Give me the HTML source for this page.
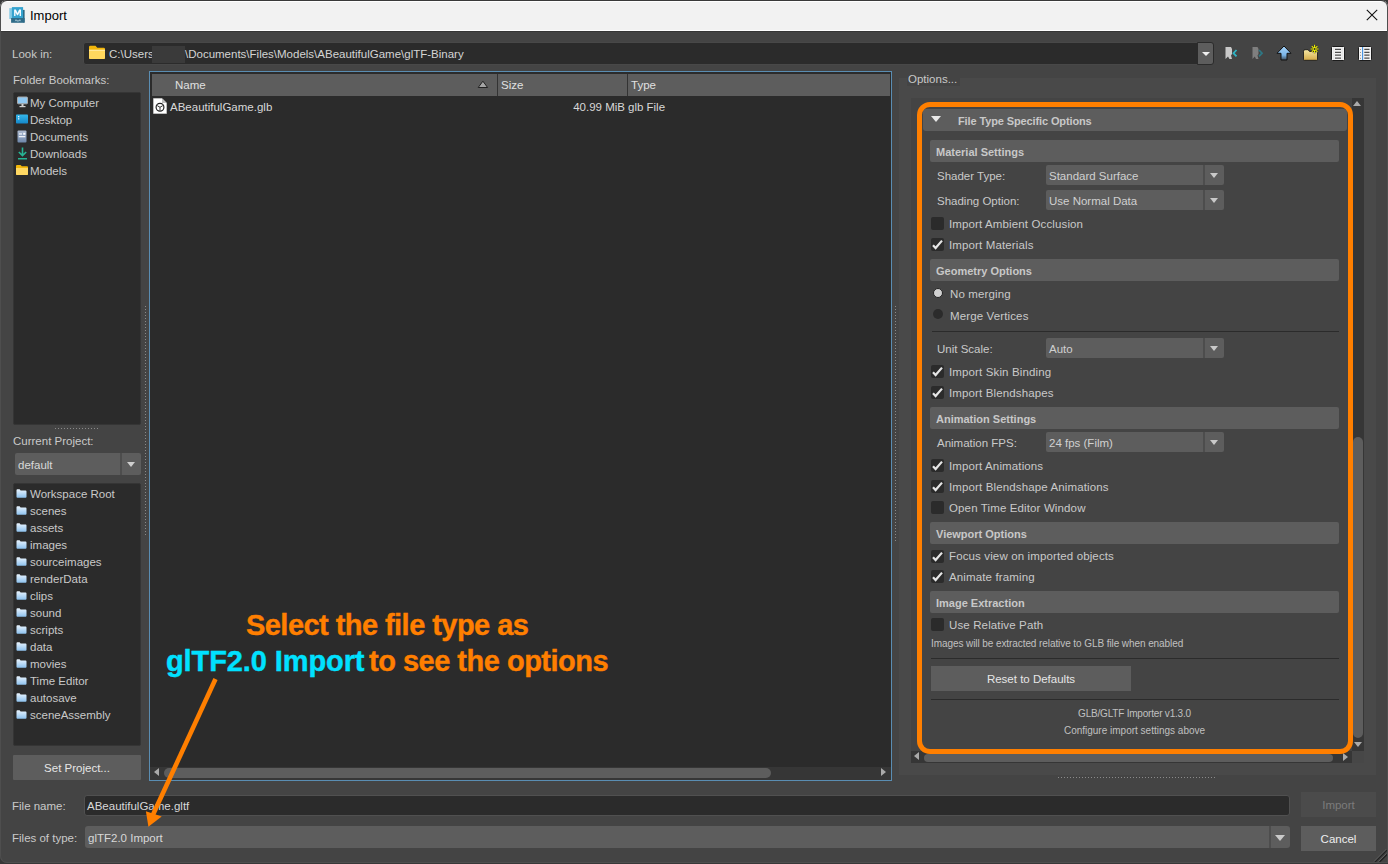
<!DOCTYPE html>
<html><head><meta charset="utf-8">
<style>
*{box-sizing:border-box;margin:0;padding:0}
html,body{width:1388px;height:864px;overflow:hidden;background:#383838}
body{font-family:"Liberation Sans",sans-serif;font-size:11.5px;color:#c9c9c9;position:relative}
.a{position:absolute}
.t{position:absolute;white-space:nowrap;line-height:14px}
.win{position:absolute;left:0;top:0;width:1388px;height:863px;background:#444444;border-radius:7px 7px 0 7px;overflow:hidden}
.frame{position:absolute;left:0;top:0;width:1388px;height:863px;border-radius:7px 7px 0 7px;border:1px solid #4e4e4e;border-top-color:#3a3a3a;pointer-events:none}
.title{position:absolute;left:0;top:0;width:1388px;height:32px;background:#f2f2f2;border-top:1px solid #3a3a3a;border-bottom:1px solid #363636;box-shadow:inset 0 1px 0 #fff,inset 0 -1px 0 #fff}
.hdr{position:absolute;background:#5d5d5d;border-radius:2px;left:930px;width:409px;height:22px}
.hdr span{position:absolute;left:6px;top:5px;font-weight:bold;color:#c8c8c8;white-space:nowrap;font-size:11px;line-height:14px}
.cb{position:absolute;left:931px;width:13px;height:13px;background:#2b2b2b;border-radius:2px}
.cb svg{position:absolute;left:0;top:0}
.lbl{position:absolute;left:949px;white-space:nowrap;color:#c9c9c9;line-height:14px;letter-spacing:0.13px}
.combo{position:absolute;left:1046px;width:178px;height:20px;background:#5d5d5d;border-radius:2px}
.combo .sep{position:absolute;left:157px;top:0;width:2px;height:20px;background:#4d4d4d}
.combo .ar{position:absolute;left:164px;top:8px;width:0;height:0;border-left:4.5px solid transparent;border-right:4.5px solid transparent;border-top:5px solid #c9c9c9}
.combo span{position:absolute;left:3px;top:4px;white-space:nowrap;color:#d0d0d0;line-height:14px}
.flab{position:absolute;left:937px;white-space:nowrap;color:#c9c9c9;line-height:14px}
.sepl{position:absolute;left:931px;width:408px;height:1px;background:#2b2b2b}
.row{position:absolute;left:30px;white-space:nowrap;line-height:14px;color:#c9c9c9}
</style></head><body>
<div class="win">
  <!-- title bar -->
  <div class="title"></div>
  <svg class="a" style="left:6px;top:4px" width="22" height="22" viewBox="0 0 22 22">
<rect x="3.3" y="4.1" width="2.8" height="10.9" fill="#86cbe6"/>
<rect x="17" y="5.9" width="1.6" height="12.5" fill="#2a6580"/>
<rect x="5.9" y="3.1" width="11.2" height="10.9" fill="#35a3cf"/>
<rect x="5.1" y="14" width="13.5" height="4.8" fill="#2e6b88"/>
<path d="M8.1 12V5.6H9.9L11.5 9L13.1 5.6H15V12H13.6V8.2L12 11.3H11L9.5 8.2V12Z" fill="#f4fbff"/>
<path d="M9.3 17.2L10 15.6L10.7 17.2M11.4 16.2V17.2H12.4V16.2M13.2 17.2L13.9 15.6L14.6 17.2" stroke="#cfe3ec" stroke-width="0.6" fill="none"/>
</svg>
  <div class="t" style="left:30px;top:8px;color:#000;font-size:13px;line-height:15px">Import</div>
  <svg class="a" style="left:1366px;top:9px" width="12" height="12"><path d="M0.8 0.8L11.2 11.2M11.2 0.8L0.8 11.2" stroke="#111" stroke-width="1.1"/></svg>

  <!-- Look in -->
  <div class="t" style="left:12px;top:47px">Look in:</div>
  <div class="a" style="left:83px;top:42px;width:1131px;height:23px;background:#2b2b2b;border-radius:3px;border:1px solid #484848"></div>
  <div class="a" style="left:1197px;top:42px;width:17px;height:23px;background:#5d5d5d;border-radius:0 3px 3px 0;border:1px solid #2b2b2b"></div>
  <div class="a" style="left:1201.5px;top:52px;width:0;height:0;border-left:4px solid transparent;border-right:4px solid transparent;border-top:4.5px solid #f0f0f0"></div>
  <svg class="a" style="left:89px;top:45px" width="17" height="15" viewBox="0 0 17 15">
<path d="M0 2Q0 0.7 1.3 0.7H6.5L8.3 2.8H14.7Q16 2.8 16 4.1V12.7Q16 14 14.7 14H1.3Q0 14 0 12.7Z" fill="#f2b60a"/>
<path d="M0 4.8H16V12.7Q16 14 14.7 14H1.3Q0 14 0 12.7Z" fill="#ffd75e"/>
<path d="M0 4.8H16V6H0Z" fill="#ffe79a"/>
</svg>
  <div class="t" style="left:109px;top:47px;color:#d4d4d4">C:\Users\</div>
  <div class="a" style="left:152px;top:46px;width:33px;height:17px;background:#3a3a3a"></div>
  <div class="t" style="left:185px;top:47px;color:#d4d4d4">\Documents\Files\Models\ABeautifulGame\glTF-Binary</div>
  <svg class="a" style="left:1225px;top:46px" width="14" height="14" viewBox="0 0 14 14">
<path d="M0.5 1H6L7 3V8L6 9.5L7 13H4.5L3 10.5L0.5 13Z" fill="#c9c9c9"/>
<path d="M11.5 4L8.5 7.2L11.5 10.4" stroke="#2fb3c4" stroke-width="1.8" fill="none"/>
</svg>
<svg class="a" style="left:1252px;top:46px" width="12" height="14" viewBox="0 0 12 14">
<path d="M0.5 1H5.5L6.5 3V8L5.5 9.5L6.5 13H4L2.8 10.5L0.5 13Z" fill="#7f7f7f"/>
<path d="M7 4L10 7.2L7 10.4" stroke="#2e7784" stroke-width="1.8" fill="none"/>
</svg>
<svg class="a" style="left:1276px;top:45px" width="16" height="16" viewBox="0 0 16 16">
<defs><linearGradient id="ug" x1="0" y1="0" x2="0" y2="1"><stop offset="0" stop-color="#a8d4f8"/><stop offset="0.65" stop-color="#7ab6ea"/><stop offset="1" stop-color="#3b4a58"/></linearGradient></defs>
<path d="M8 1L15 8.3H11V15H5V8.3H1Z" fill="url(#ug)" stroke="#111" stroke-width="1" stroke-linejoin="miter"/>
</svg>
<svg class="a" style="left:1302px;top:44px" width="18" height="18" viewBox="0 0 18 18">
<defs><linearGradient id="nfg" x1="0" y1="0" x2="0" y2="1"><stop offset="0" stop-color="#f4e7a6"/><stop offset="1" stop-color="#d6ac48"/></linearGradient></defs>
<path d="M1.5 7.2Q1.5 5.7 3 5.7H6L7.6 7.5H14.5Q15.5 7.5 15.5 8.5V15.5Q15.5 16.3 14.7 16.3H2.3Q1.5 16.3 1.5 15.5Z" fill="url(#nfg)" stroke="#1d1d1d" stroke-width="0.9"/>
<path d="M12.6 0.8V9.2M8.6 5H16.6M9.8 2.2L15.4 7.8M15.4 2.2L9.8 7.8" stroke="#2a2a2a" stroke-width="1.7"/>
<path d="M12.6 0.8V9.2M8.6 5H16.6M9.8 2.2L15.4 7.8M15.4 2.2L9.8 7.8" stroke="#f2f200" stroke-width="1.1"/>
<circle cx="12.6" cy="5" r="1" fill="#2a2a2a"/>
</svg>
<svg class="a" style="left:1331px;top:46px" width="14" height="15" viewBox="0 0 14 15">
<rect x="0.5" y="0.5" width="13" height="14" rx="1" fill="#f2f2f2" stroke="#1c1c1c"/>
<path d="M2.8 1V14M11.2 1V14" stroke="#dedede" stroke-width="0.8"/>
<path d="M4 3.3H10M4 6.3H10M4 9.2H10M4 12.2H10" stroke="#4e4e4e" stroke-width="1.2"/>
</svg>
<svg class="a" style="left:1358px;top:46px" width="14" height="15" viewBox="0 0 14 15">
<rect x="0.5" y="0.5" width="13" height="14" rx="1" fill="#f2f2f2" stroke="#1c1c1c"/>
<path d="M4.6 1V14" stroke="#3f8fe0" stroke-width="1.1"/>
<path d="M2.5 3V3.6M2.5 6V6.6M2.5 8.9V9.5M2.5 11.9V12.5" stroke="#555" stroke-width="1"/>
<path d="M6.3 3.3H11.5M6.3 6.3H11.5M6.3 9.2H11.5M6.3 12.2H11.5" stroke="#4e4e4e" stroke-width="1.2"/>
</svg>

  <!-- Left panel -->
  <div class="t" style="left:13px;top:73px">Folder Bookmarks:</div>
  <div class="a" style="left:13px;top:92px;width:128px;height:333px;background:#2b2b2b;border:1px solid #353535;border-radius:2px"></div>
  <svg class="a" style="left:17px;top:96px" width="11" height="12" viewBox="0 0 11 12">
<rect x="0.5" y="1" width="10" height="6.8" rx="0.8" fill="#8ec8f2" stroke="#a8a8a8" stroke-width="1"/>
<rect x="4.5" y="8" width="2" height="2.5" fill="#cfcfcf"/><rect x="2.5" y="10" width="6" height="1.2" fill="#cfcfcf"/>
</svg>
<div class="row" style="top:96px">My Computer</div>
<svg class="a" style="left:16px;top:114px" width="12" height="10" viewBox="0 0 12 10">
<defs><linearGradient id="dg" x1="0" y1="0" x2="0" y2="1"><stop offset="0" stop-color="#35b7ea"/><stop offset="1" stop-color="#1587c8"/></linearGradient></defs>
<rect x="0" y="0.5" width="12" height="9" rx="0.8" fill="url(#dg)"/><rect x="2" y="2" width="1.3" height="1.3" fill="#e8f6ff"/><rect x="2" y="4.2" width="1.3" height="1.3" fill="#e8f6ff"/>
</svg>
<div class="row" style="top:113px">Desktop</div>
<svg class="a" style="left:17px;top:130px" width="10" height="13" viewBox="0 0 10 13">
<defs><linearGradient id="docg" x1="0" y1="0" x2="0" y2="1"><stop offset="0" stop-color="#aebbd0"/><stop offset="1" stop-color="#6f88ab"/></linearGradient></defs>
<rect x="0.5" y="0.5" width="9" height="12" rx="1" fill="url(#docg)"/><rect x="2" y="3.3" width="3" height="1.3" fill="#eef2f8"/><rect x="6.2" y="2.8" width="2.2" height="2" fill="#fbfcfe"/><rect x="1.8" y="6" width="6.5" height="1.3" fill="#eef2f8"/>
</svg>
<div class="row" style="top:130px">Documents</div>
<svg class="a" style="left:17px;top:147px" width="11" height="13" viewBox="0 0 11 13">
<path d="M5.5 0.5V8.5M1.8 5L5.5 8.6L9.2 5M1 11.8H10" stroke="#27b494" stroke-width="1.6" fill="none"/>
</svg>
<div class="row" style="top:147px">Downloads</div>
<svg class="a" style="left:16px;top:165px" width="12" height="10" viewBox="0 0 12 10">
<path d="M0 1Q0 0 1 0H4.5L5.8 1.3H11Q12 1.3 12 2.3V9Q12 10 11 10H1Q0 10 0 9Z" fill="#f2b60a"/>
<path d="M0 3H12V9Q12 10 11 10H1Q0 10 0 9Z" fill="#ffd863"/>
</svg>
<div class="row" style="top:164px">Models</div>
  <div class="a" style="left:55px;top:428px;width:43px;height:1px;background:repeating-linear-gradient(to right,#8a8a8a 0 1px,transparent 1px 3px)"></div>
  <div class="t" style="left:13px;top:434px">Current Project:</div>
  <div class="a" style="left:15px;top:453px;width:126px;height:22px;background:#5d5d5d;border-radius:2px"></div>
  <div class="a" style="left:120px;top:453px;width:2px;height:22px;background:#4d4d4d"></div>
  <div class="a" style="left:127px;top:462px;width:0;height:0;border-left:4.5px solid transparent;border-right:4.5px solid transparent;border-top:5px solid #cfcfcf"></div>
  <div class="t" style="left:18px;top:458px;color:#d8d8d8">default</div>
  <div class="a" style="left:13px;top:483px;width:128px;height:263px;background:#2b2b2b;border:1px solid #353535;border-radius:2px"></div>
  <svg class="a" style="left:16px;top:489px" width="11" height="9" viewBox="0 0 11 9"><defs><linearGradient id="pf489" x1="0" y1="0" x2="0" y2="1"><stop offset="0" stop-color="#eaf5ff"/><stop offset="1" stop-color="#8ec2ee"/></linearGradient></defs><path d="M0.5 1.2Q0.5 0.3 1.4 0.3H3.6L4.6 1.6H9.6Q10.5 1.6 10.5 2.5V7.8Q10.5 8.7 9.6 8.7H1.4Q0.5 8.7 0.5 7.8Z" fill="url(#pf489)"/></svg><div class="row" style="top:487px">Workspace Root</div>
<svg class="a" style="left:16px;top:506px" width="11" height="9" viewBox="0 0 11 9"><defs><linearGradient id="pf506" x1="0" y1="0" x2="0" y2="1"><stop offset="0" stop-color="#eaf5ff"/><stop offset="1" stop-color="#8ec2ee"/></linearGradient></defs><path d="M0.5 1.2Q0.5 0.3 1.4 0.3H3.6L4.6 1.6H9.6Q10.5 1.6 10.5 2.5V7.8Q10.5 8.7 9.6 8.7H1.4Q0.5 8.7 0.5 7.8Z" fill="url(#pf506)"/></svg><div class="row" style="top:504px">scenes</div>
<svg class="a" style="left:16px;top:523px" width="11" height="9" viewBox="0 0 11 9"><defs><linearGradient id="pf523" x1="0" y1="0" x2="0" y2="1"><stop offset="0" stop-color="#eaf5ff"/><stop offset="1" stop-color="#8ec2ee"/></linearGradient></defs><path d="M0.5 1.2Q0.5 0.3 1.4 0.3H3.6L4.6 1.6H9.6Q10.5 1.6 10.5 2.5V7.8Q10.5 8.7 9.6 8.7H1.4Q0.5 8.7 0.5 7.8Z" fill="url(#pf523)"/></svg><div class="row" style="top:521px">assets</div>
<svg class="a" style="left:16px;top:540px" width="11" height="9" viewBox="0 0 11 9"><defs><linearGradient id="pf540" x1="0" y1="0" x2="0" y2="1"><stop offset="0" stop-color="#eaf5ff"/><stop offset="1" stop-color="#8ec2ee"/></linearGradient></defs><path d="M0.5 1.2Q0.5 0.3 1.4 0.3H3.6L4.6 1.6H9.6Q10.5 1.6 10.5 2.5V7.8Q10.5 8.7 9.6 8.7H1.4Q0.5 8.7 0.5 7.8Z" fill="url(#pf540)"/></svg><div class="row" style="top:538px">images</div>
<svg class="a" style="left:16px;top:557px" width="11" height="9" viewBox="0 0 11 9"><defs><linearGradient id="pf557" x1="0" y1="0" x2="0" y2="1"><stop offset="0" stop-color="#eaf5ff"/><stop offset="1" stop-color="#8ec2ee"/></linearGradient></defs><path d="M0.5 1.2Q0.5 0.3 1.4 0.3H3.6L4.6 1.6H9.6Q10.5 1.6 10.5 2.5V7.8Q10.5 8.7 9.6 8.7H1.4Q0.5 8.7 0.5 7.8Z" fill="url(#pf557)"/></svg><div class="row" style="top:555px">sourceimages</div>
<svg class="a" style="left:16px;top:574px" width="11" height="9" viewBox="0 0 11 9"><defs><linearGradient id="pf574" x1="0" y1="0" x2="0" y2="1"><stop offset="0" stop-color="#eaf5ff"/><stop offset="1" stop-color="#8ec2ee"/></linearGradient></defs><path d="M0.5 1.2Q0.5 0.3 1.4 0.3H3.6L4.6 1.6H9.6Q10.5 1.6 10.5 2.5V7.8Q10.5 8.7 9.6 8.7H1.4Q0.5 8.7 0.5 7.8Z" fill="url(#pf574)"/></svg><div class="row" style="top:572px">renderData</div>
<svg class="a" style="left:16px;top:591px" width="11" height="9" viewBox="0 0 11 9"><defs><linearGradient id="pf591" x1="0" y1="0" x2="0" y2="1"><stop offset="0" stop-color="#eaf5ff"/><stop offset="1" stop-color="#8ec2ee"/></linearGradient></defs><path d="M0.5 1.2Q0.5 0.3 1.4 0.3H3.6L4.6 1.6H9.6Q10.5 1.6 10.5 2.5V7.8Q10.5 8.7 9.6 8.7H1.4Q0.5 8.7 0.5 7.8Z" fill="url(#pf591)"/></svg><div class="row" style="top:589px">clips</div>
<svg class="a" style="left:16px;top:608px" width="11" height="9" viewBox="0 0 11 9"><defs><linearGradient id="pf608" x1="0" y1="0" x2="0" y2="1"><stop offset="0" stop-color="#eaf5ff"/><stop offset="1" stop-color="#8ec2ee"/></linearGradient></defs><path d="M0.5 1.2Q0.5 0.3 1.4 0.3H3.6L4.6 1.6H9.6Q10.5 1.6 10.5 2.5V7.8Q10.5 8.7 9.6 8.7H1.4Q0.5 8.7 0.5 7.8Z" fill="url(#pf608)"/></svg><div class="row" style="top:606px">sound</div>
<svg class="a" style="left:16px;top:625px" width="11" height="9" viewBox="0 0 11 9"><defs><linearGradient id="pf625" x1="0" y1="0" x2="0" y2="1"><stop offset="0" stop-color="#eaf5ff"/><stop offset="1" stop-color="#8ec2ee"/></linearGradient></defs><path d="M0.5 1.2Q0.5 0.3 1.4 0.3H3.6L4.6 1.6H9.6Q10.5 1.6 10.5 2.5V7.8Q10.5 8.7 9.6 8.7H1.4Q0.5 8.7 0.5 7.8Z" fill="url(#pf625)"/></svg><div class="row" style="top:623px">scripts</div>
<svg class="a" style="left:16px;top:642px" width="11" height="9" viewBox="0 0 11 9"><defs><linearGradient id="pf642" x1="0" y1="0" x2="0" y2="1"><stop offset="0" stop-color="#eaf5ff"/><stop offset="1" stop-color="#8ec2ee"/></linearGradient></defs><path d="M0.5 1.2Q0.5 0.3 1.4 0.3H3.6L4.6 1.6H9.6Q10.5 1.6 10.5 2.5V7.8Q10.5 8.7 9.6 8.7H1.4Q0.5 8.7 0.5 7.8Z" fill="url(#pf642)"/></svg><div class="row" style="top:640px">data</div>
<svg class="a" style="left:16px;top:659px" width="11" height="9" viewBox="0 0 11 9"><defs><linearGradient id="pf659" x1="0" y1="0" x2="0" y2="1"><stop offset="0" stop-color="#eaf5ff"/><stop offset="1" stop-color="#8ec2ee"/></linearGradient></defs><path d="M0.5 1.2Q0.5 0.3 1.4 0.3H3.6L4.6 1.6H9.6Q10.5 1.6 10.5 2.5V7.8Q10.5 8.7 9.6 8.7H1.4Q0.5 8.7 0.5 7.8Z" fill="url(#pf659)"/></svg><div class="row" style="top:657px">movies</div>
<svg class="a" style="left:16px;top:676px" width="11" height="9" viewBox="0 0 11 9"><defs><linearGradient id="pf676" x1="0" y1="0" x2="0" y2="1"><stop offset="0" stop-color="#eaf5ff"/><stop offset="1" stop-color="#8ec2ee"/></linearGradient></defs><path d="M0.5 1.2Q0.5 0.3 1.4 0.3H3.6L4.6 1.6H9.6Q10.5 1.6 10.5 2.5V7.8Q10.5 8.7 9.6 8.7H1.4Q0.5 8.7 0.5 7.8Z" fill="url(#pf676)"/></svg><div class="row" style="top:674px">Time Editor</div>
<svg class="a" style="left:16px;top:693px" width="11" height="9" viewBox="0 0 11 9"><defs><linearGradient id="pf693" x1="0" y1="0" x2="0" y2="1"><stop offset="0" stop-color="#eaf5ff"/><stop offset="1" stop-color="#8ec2ee"/></linearGradient></defs><path d="M0.5 1.2Q0.5 0.3 1.4 0.3H3.6L4.6 1.6H9.6Q10.5 1.6 10.5 2.5V7.8Q10.5 8.7 9.6 8.7H1.4Q0.5 8.7 0.5 7.8Z" fill="url(#pf693)"/></svg><div class="row" style="top:691px">autosave</div>
<svg class="a" style="left:16px;top:710px" width="11" height="9" viewBox="0 0 11 9"><defs><linearGradient id="pf710" x1="0" y1="0" x2="0" y2="1"><stop offset="0" stop-color="#eaf5ff"/><stop offset="1" stop-color="#8ec2ee"/></linearGradient></defs><path d="M0.5 1.2Q0.5 0.3 1.4 0.3H3.6L4.6 1.6H9.6Q10.5 1.6 10.5 2.5V7.8Q10.5 8.7 9.6 8.7H1.4Q0.5 8.7 0.5 7.8Z" fill="url(#pf710)"/></svg><div class="row" style="top:708px">sceneAssembly</div>

  <div class="a" style="left:13px;top:755px;width:128px;height:25px;background:#5d5d5d;border-radius:1px"></div>
  <div class="t" style="left:13px;top:761px;width:128px;text-align:center;color:#e6e6e6">Set Project...</div>

  <!-- File list -->
  <div class="a" style="left:149px;top:71px;width:743px;height:710px;border:1px solid #5a8db2;background:#2b2b2b"></div>
  <div class="a" style="left:152px;top:74px;width:738px;height:22px;background:#5d5d5d"></div>
  <div class="a" style="left:497px;top:74px;width:1px;height:22px;background:#333"></div>
  <div class="a" style="left:627px;top:74px;width:1px;height:22px;background:#333"></div>
  <div class="t" style="left:175px;top:78px;color:#e0e0e0">Name</div>
  <svg class="a" style="left:477px;top:80px" width="12" height="9"><path d="M5.9 1.2L10.6 7.5H1.2Z" fill="#a5a5a5" stroke="#222" stroke-width="1" stroke-linejoin="round"/></svg>
  <div class="t" style="left:501px;top:78px;color:#e0e0e0">Size</div>
  <div class="t" style="left:631px;top:78px;color:#e0e0e0">Type</div>
  <svg class="a" style="left:153px;top:98px" width="14" height="16" viewBox="0 0 14 16">
<path d="M0.5 0.5H9L13.5 5V15.5H0.5Z" fill="#ffffff" stroke="#d8d8d8" stroke-width="0.6"/>
<path d="M9 0.5V5H13.5" fill="#bdbdbd"/>
<circle cx="7" cy="9.3" r="3.9" fill="none" stroke="#222" stroke-width="1.2"/>
<path d="M4.2 7.6L7 9.3L9.8 7.6M7 9.3V12.6" stroke="#333" stroke-width="1" fill="none"/>
</svg>
  <div class="t" style="left:170px;top:100px;color:#d8d8d8">ABeautifulGame.glb</div>
  <div class="t" style="left:497px;width:128px;text-align:right;top:100px;color:#d8d8d8">40.99 MiB</div>
  <div class="t" style="left:628px;top:100px;color:#d8d8d8">glb File</div>
  <!-- h scrollbar -->
  <div class="a" style="left:150px;top:767px;width:741px;height:13px;background:#363636"></div>
  <div class="a" style="left:154px;top:768px;width:0;height:0;border-top:4.7px solid transparent;border-bottom:4.7px solid transparent;border-right:5.5px solid #aaa"></div>
  <div class="a" style="left:164px;top:768px;width:607px;height:10px;background:#5d5d5d;border-radius:5px"></div>
  <div class="a" style="left:880.5px;top:768px;width:0;height:0;border-top:4.7px solid transparent;border-bottom:4.7px solid transparent;border-left:5.5px solid #aaa"></div>
  <div class="a" style="left:145px;top:306px;width:1px;height:231px;background:repeating-linear-gradient(to bottom,#8a8a8a 0 1px,transparent 1px 3px)"></div>
  <div class="a" style="left:895px;top:306px;width:1px;height:235px;background:repeating-linear-gradient(to bottom,#8a8a8a 0 1px,transparent 1px 3px)"></div>

  <!-- Options panel -->
  <div class="a" style="left:899px;top:78px;width:477px;height:697px;background:#494949"></div>
  <div class="a" style="left:907px;top:72px;width:53px;height:13.5px;background:#444"></div>
  <div class="t" style="left:908px;top:72px;color:#c9c9c9">Options...</div>
  <div class="a" style="left:911px;top:98px;width:453px;height:665px;background:#444"></div>
    <div class="a" style="left:923px;top:109px;width:424px;height:22px;background:#5d5d5d;border-radius:3px"></div>
  <div class="a" style="left:931px;top:116px;width:0;height:0;border-left:5.5px solid transparent;border-right:5.5px solid transparent;border-top:6px solid #e8e8e8"></div>
  <div class="t" style="left:958px;top:114px;font-weight:bold;font-size:11px;letter-spacing:-0.12px;color:#c8c8c8">File Type Specific Options</div>

  <div class="hdr" style="top:140px"><span>Material Settings</span></div>
  <div class="flab" style="top:169px">Shader Type:</div>
  <div class="combo" style="top:165px"><span>Standard Surface</span><div class="sep"></div><div class="ar"></div></div>
  <div class="flab" style="top:194px">Shading Option:</div>
  <div class="combo" style="top:190px"><span>Use Normal Data</span><div class="sep"></div><div class="ar"></div></div>
  <div class="cb" style="top:217px"></div><div class="lbl" style="top:217px">Import Ambient Occlusion</div>
  <div class="cb" style="top:238px"><svg width="13" height="13"><path d="M2 7.2L4.6 10L11 2.6" stroke="#e6e6e6" stroke-width="2.2" fill="none"/></svg></div><div class="lbl" style="top:238px">Import Materials</div>

  <div class="hdr" style="top:259px"><span>Geometry Options</span></div>
  <div class="a" style="left:932.5px;top:287.5px;width:10px;height:10px;border-radius:50%;background:#d0d0d0;border:1.6px solid #222"></div>
  <div class="lbl" style="left:950px;top:287px">No merging</div>
  <div class="a" style="left:932.5px;top:309.3px;width:10px;height:10px;border-radius:50%;background:#2b2b2b"></div>
  <div class="lbl" style="left:950px;top:309px">Merge Vertices</div>
  <div class="sepl" style="top:331px;left:932px;width:407px"></div>
  <div class="flab" style="top:342px">Unit Scale:</div>
  <div class="combo" style="top:338px"><span>Auto</span><div class="sep"></div><div class="ar"></div></div>
  <div class="cb" style="top:365px"><svg width="13" height="13"><path d="M2 7.2L4.6 10L11 2.6" stroke="#e6e6e6" stroke-width="2.2" fill="none"/></svg></div><div class="lbl" style="top:365px">Import Skin Binding</div>
  <div class="cb" style="top:386px"><svg width="13" height="13"><path d="M2 7.2L4.6 10L11 2.6" stroke="#e6e6e6" stroke-width="2.2" fill="none"/></svg></div><div class="lbl" style="top:386px">Import Blendshapes</div>

  <div class="hdr" style="top:407px"><span>Animation Settings</span></div>
  <div class="flab" style="top:436px">Animation FPS:</div>
  <div class="combo" style="top:432px"><span>24 fps (Film)</span><div class="sep"></div><div class="ar"></div></div>
  <div class="cb" style="top:459px"><svg width="13" height="13"><path d="M2 7.2L4.6 10L11 2.6" stroke="#e6e6e6" stroke-width="2.2" fill="none"/></svg></div><div class="lbl" style="top:459px">Import Animations</div>
  <div class="cb" style="top:480px"><svg width="13" height="13"><path d="M2 7.2L4.6 10L11 2.6" stroke="#e6e6e6" stroke-width="2.2" fill="none"/></svg></div><div class="lbl" style="top:480px">Import Blendshape Animations</div>
  <div class="cb" style="top:501px"></div><div class="lbl" style="top:501px">Open Time Editor Window</div>

  <div class="hdr" style="top:522px"><span>Viewport Options</span></div>
  <div class="cb" style="top:550px"><svg width="13" height="13"><path d="M2 7.2L4.6 10L11 2.6" stroke="#e6e6e6" stroke-width="2.2" fill="none"/></svg></div><div class="lbl" style="top:549px">Focus view on imported objects</div>
  <div class="cb" style="top:570px"><svg width="13" height="13"><path d="M2 7.2L4.6 10L11 2.6" stroke="#e6e6e6" stroke-width="2.2" fill="none"/></svg></div><div class="lbl" style="top:570px">Animate framing</div>

  <div class="hdr" style="top:591px"><span>Image Extraction</span></div>
  <div class="cb" style="top:618px"></div><div class="lbl" style="top:618px">Use Relative Path</div>
  <div class="t" style="left:931px;top:637px;font-size:10px;letter-spacing:-0.08px;color:#c0c0c0">Images will be extracted relative to GLB file when enabled</div>
  <div class="sepl" style="top:658px"></div>
  <div class="a" style="left:931px;top:666px;width:200px;height:25px;background:#5d5d5d"></div>
  <div class="t" style="left:931px;top:672px;width:200px;text-align:center;color:#e6e6e6">Reset to Defaults</div>
  <div class="sepl" style="top:699px"></div>
  <div class="t" style="left:930px;top:707px;width:409px;text-align:center;font-size:10px;letter-spacing:-0.2px;color:#c0c0c0">GLB/GLTF Importer v1.3.0</div>
  <div class="t" style="left:930px;top:724px;width:409px;text-align:center;font-size:10px;color:#c0c0c0">Configure import settings above</div>

  <!-- scrollbars -->
  <div class="a" style="left:1352px;top:98px;width:12px;height:653px;background:#363636"></div>
  <div class="a" style="left:1353px;top:101px;width:0;height:0;border-left:4.6px solid transparent;border-right:4.6px solid transparent;border-bottom:5.2px solid #aaa"></div>
  <div class="a" style="left:1353px;top:437px;width:10px;height:301px;background:#5d5d5d;border-radius:5px"></div>
  <div class="a" style="left:1353.5px;top:742px;width:0;height:0;border-left:4.6px solid transparent;border-right:4.6px solid transparent;border-top:5px solid #aaa"></div>
  <div class="a" style="left:911px;top:751px;width:441px;height:12px;background:#363636"></div>
  <div class="a" style="left:913.8px;top:752px;width:0;height:0;border-top:4.3px solid transparent;border-bottom:4.3px solid transparent;border-right:5.3px solid #aaa"></div>
  <div class="a" style="left:924px;top:754px;width:409px;height:8px;background:#5d5d5d;border-radius:4px"></div>
  <div class="a" style="left:1343px;top:753px;width:0;height:0;border-top:4.3px solid transparent;border-bottom:4.3px solid transparent;border-left:5.3px solid #aaa"></div>
  <div class="a" style="left:1352px;top:751px;width:12px;height:12px;background:#474747"></div>
  <!-- orange highlight -->
  <div class="a" style="left:917px;top:102px;width:436px;height:652px;border:5px solid #ff7f00;border-radius:13px"></div>


  <!-- Bottom -->
  <div class="a" style="left:1058px;top:777px;width:157px;height:1px;background:repeating-linear-gradient(to right,#8a8a8a 0 1px,transparent 1px 3px)"></div>
  <div class="t" style="left:12px;top:799px">File name:</div>
  <div class="a" style="left:84px;top:795px;width:1206px;height:21px;background:#2b2b2b;border:1px solid #505050;border-radius:3px"></div>
  <div class="t" style="left:87px;top:799px;color:#d8d8d8">ABeautifulGame.gltf</div>
  <div class="t" style="left:12px;top:831px">Files of type:</div>
  <div class="a" style="left:85px;top:826px;width:1205px;height:22px;background:#5d5d5d;border-radius:3px"></div>
  <div class="a" style="left:1269px;top:826px;width:2px;height:22px;background:#4d4d4d"></div>
  <div class="a" style="left:1275px;top:835px;width:0;height:0;border-left:5px solid transparent;border-right:5px solid transparent;border-top:6px solid #c9c9c9"></div>
  <div class="t" style="left:88px;top:831px;color:#d8d8d8">glTF2.0 Import</div>
  <div class="a" style="left:1301px;top:792px;width:75px;height:25px;background:#4b4b4b"></div>
  <div class="t" style="left:1301px;top:798px;width:75px;text-align:center;color:#7b7b7b">Import</div>
  <div class="a" style="left:1301px;top:826px;width:75px;height:25px;background:#5d5d5d"></div>
  <div class="t" style="left:1301px;top:832px;width:75px;text-align:center;color:#eeeeee">Cancel</div>

  <!-- Annotation -->
  <div class="t" id="ann1" style="left:246px;top:609px;font-size:29px;line-height:32px;font-weight:bold;-webkit-text-stroke:0.4px currentColor;color:#ff7f00;letter-spacing:-0.55px">Select the file type as</div>
  <div class="t" id="ann2" style="left:166px;top:645px;font-size:29px;line-height:32px;font-weight:bold;-webkit-text-stroke:0.4px currentColor;color:#00e1ff;letter-spacing:-0.1px">glTF2.0 Import</div>
  <div class="t" id="ann3" style="left:369px;top:645px;font-size:29px;line-height:32px;font-weight:bold;-webkit-text-stroke:0.4px currentColor;color:#ff7f00;letter-spacing:-0.5px">to see the options</div>
  
  <svg class="a" style="left:0;top:0" width="1388" height="864"><line x1="215.5" y1="679" x2="151" y2="819" stroke="#ff7f00" stroke-width="4.6"/><polygon points="148.4,826.7 145.9,811.3 161.7,816.6" fill="#ff7f00"/></svg>
</div>
<svg class="a" style="left:1372px;top:847px" width="16" height="16"><path d="M3 15L15.5 2.5M7.5 15L15.5 7" stroke="#222" stroke-width="1.4"/><path d="M2 14.5L14.5 2M6.5 14.5L14.5 6.5" stroke="#6a6a6a" stroke-width="0.7"/></svg>
<div class="frame"></div>
</body></html>
